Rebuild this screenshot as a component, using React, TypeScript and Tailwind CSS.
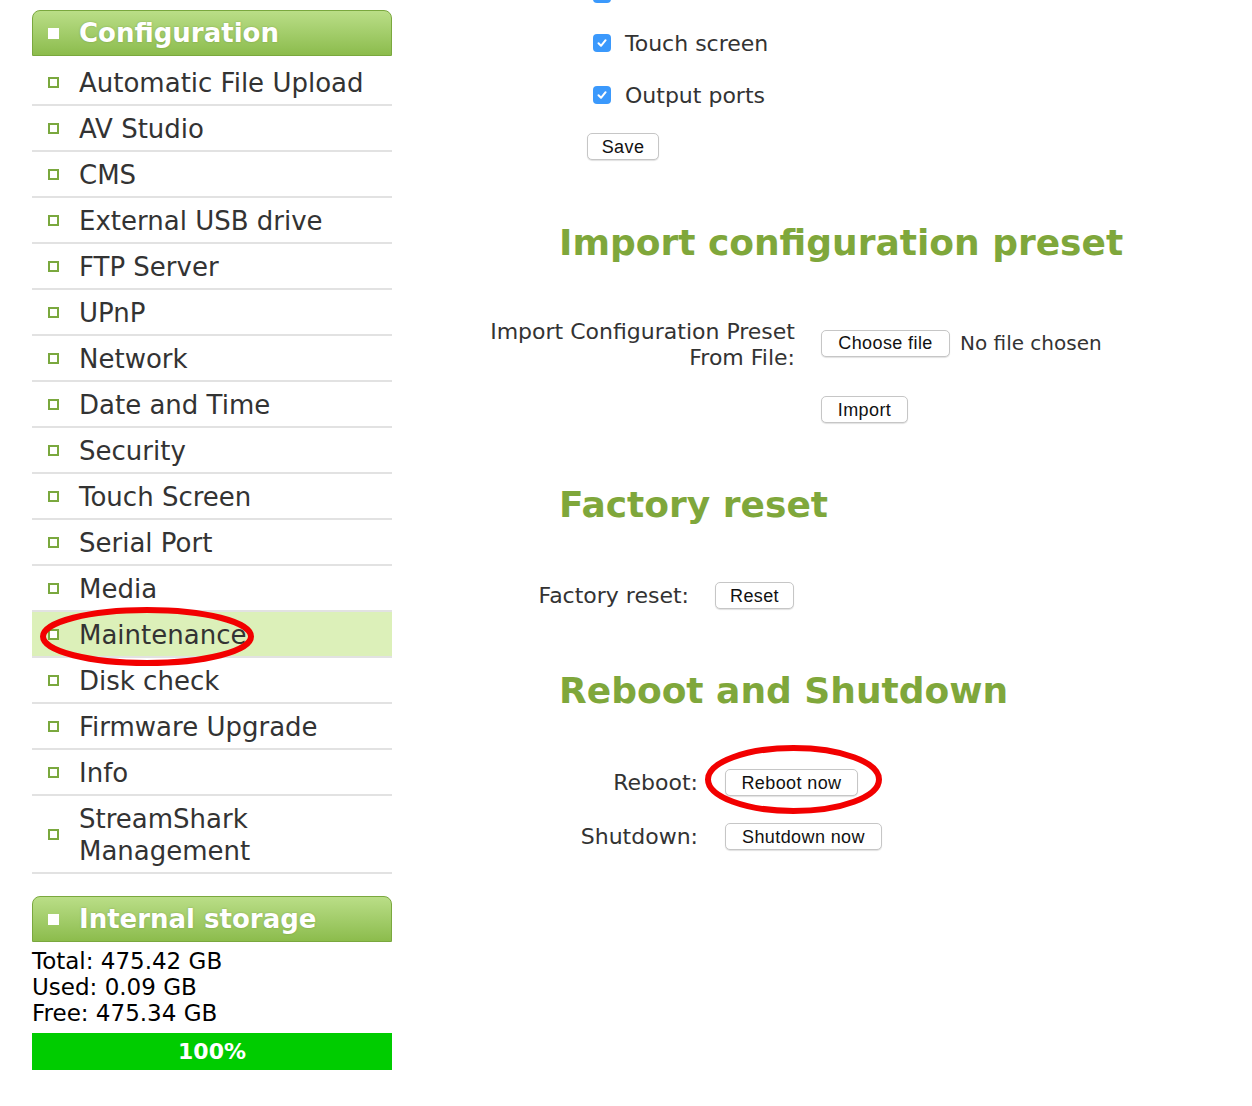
import React from "react";

const menu = [
  "Automatic File Upload",
  "AV Studio",
  "CMS",
  "External USB drive",
  "FTP Server",
  "UPnP",
  "Network",
  "Date and Time",
  "Security",
  "Touch Screen",
  "Serial Port",
  "Media",
  "Maintenance",
  "Disk check",
  "Firmware Upgrade",
  "Info",
  "StreamShark Management",
];

function PanelHeader({ title }: { title: string }) {
  return (
    <div className="flex h-[46px] items-center rounded-t-[8px] border border-[#7aa83e] bg-gradient-to-b from-[#bade87] to-[#8cbc4c] pl-[15px]">
      <span className="h-[11px] w-[11px] bg-white" />
      <span className="ml-[20px] text-[26px] font-bold text-white [text-shadow:0_0_2px_rgba(60,90,20,0.35)]">
        {title}
      </span>
    </div>
  );
}

function Btn({ label, w }: { label: string; w: string }) {
  return (
    <button
      className={`h-[27px] ${w} rounded-[5px] border border-[#c6c6c6] bg-white text-center font-['Liberation_Sans',Arial,sans-serif] text-[18px] leading-none tracking-[0.4px] text-[#111] shadow-[0_1px_1px_rgba(0,0,0,0.12)]`}
    >
      {label}
    </button>
  );
}

function Box({ className = "" }: { className?: string }) {
  return (
    <span className={`flex h-[18px] w-[18px] items-center justify-center rounded-[4px] bg-[#3b99fc] ${className}`}>
      <svg viewBox="0 0 12 12" className="h-[12px] w-[12px]">
        <path d="M2.5 6.3 L5 8.8 L9.6 3.2" fill="none" stroke="white" strokeWidth="2" strokeLinecap="round" strokeLinejoin="round" />
      </svg>
    </span>
  );
}

function Check({ label }: { label: string }) {
  return (
    <div className="ml-[201px] flex h-[52px] items-center">
      <Box />
      <span className="ml-[14px] text-[22px] text-[#333]">{label}</span>
    </div>
  );
}

export default function App() {
  return (
    <div className="flex h-[1106px] overflow-hidden bg-white font-['DejaVu_Sans',Verdana,sans-serif]">
      <aside className="ml-[32px] w-[360px] shrink-0 pt-[10px]">
        <PanelHeader title="Configuration" />
        <ul className="mt-[4px]">
          {menu.map((m) => (
            <li
              key={m}
              className={`relative flex items-center border-b-2 border-[#e2e2e2] py-[6px] pl-[16px] text-[26px] leading-[32px] text-[#333] ${
                m === "Maintenance" ? "bg-[#dcf0b9]" : ""
              }`}
            >
              <span className="h-[11px] w-[11px] shrink-0 border-2 border-[#7aa83e] bg-white" />
              <span className="relative top-[1px] ml-[20px]">{m}</span>
              {m === "Maintenance" && (
                <svg className="absolute left-[8px] top-[-5px] h-[59px] w-[214px]" viewBox="0 0 214 59">
                  <ellipse cx="107" cy="29.5" rx="104" ry="26.5" fill="none" stroke="#f20000" strokeWidth="6" />
                </svg>
              )}
            </li>
          ))}
        </ul>

        <div className="mt-[22px]">
          <PanelHeader title="Internal storage" />
        </div>
        <div className="mt-[6px] text-[23px] leading-[26px] text-black">
          <div>Total: 475.42 GB</div>
          <div>Used: 0.09 GB</div>
          <div>Free: 475.34 GB</div>
        </div>
        <div className="mt-[7px] flex h-[37px] items-center justify-center bg-[#00cc00] text-[22px] font-bold text-white">
          100%
        </div>
      </aside>

      <main className="flex-1">
        <div className="mt-[-35px]">
          <div className="ml-[201px] flex h-[52px] items-center">
            <Box className="relative top-[3px]" />
          </div>
          <Check label="Touch screen" />
          <Check label="Output ports" />
        </div>
        <div className="ml-[195px] mt-[12px]">
          <Btn label="Save" w="w-[72px]" />
        </div>

        <h2 className="ml-[167px] mt-[61px] text-[36px] font-bold leading-[44px] text-[#7fa73b]">
          Import configuration preset
        </h2>

        <div className="mt-[54px] flex items-center">
          <div className="ml-[70px] w-[333px] text-right text-[22px] leading-[26px] text-[#333]">
            Import Configuration Preset
            <br />
            From File:
          </div>
          <div className="ml-[26px] mb-[4px] flex items-center">
            <Btn label="Choose file" w="w-[129px]" />
            <span className="ml-[10px] text-[20px] text-[#333]">No file chosen</span>
          </div>
        </div>
        <div className="ml-[429px] mt-[25px]">
          <Btn label="Import" w="w-[87px]" />
        </div>

        <h2 className="ml-[167px] mt-[60px] text-[36px] font-bold leading-[44px] text-[#7fa73b]">
          Factory reset
        </h2>
        <div className="mt-[55px] flex items-center">
          <div className="ml-[73px] w-[224px] text-right text-[22px] leading-[26px] text-[#333]">Factory reset:</div>
          <div className="ml-[26px]">
            <Btn label="Reset" w="w-[79px]" />
          </div>
        </div>

        <h2 className="ml-[167px] mt-[60px] text-[36px] font-bold leading-[44px] text-[#7fa73b]">
          Reboot and Shutdown
        </h2>
        <div className="mt-[56px] flex items-center">
          <div className="ml-[73px] w-[233px] text-right text-[22px] leading-[26px] text-[#333]">Reboot:</div>
          <div className="relative ml-[27px]">
            <Btn label="Reboot now" w="w-[133px]" />
            <svg className="absolute left-[-20px] top-[-24px] h-[69px] w-[177px]" viewBox="0 0 177 69">
              <ellipse cx="88.5" cy="34.5" rx="85.5" ry="31.5" fill="none" stroke="#f20000" strokeWidth="6" />
            </svg>
          </div>
        </div>
        <div className="mt-[27px] flex items-center">
          <div className="ml-[73px] w-[233px] text-right text-[22px] leading-[26px] text-[#333]">Shutdown:</div>
          <div className="ml-[27px]">
            <Btn label="Shutdown now" w="w-[157px]" />
          </div>
        </div>
      </main>
    </div>
  );
}
